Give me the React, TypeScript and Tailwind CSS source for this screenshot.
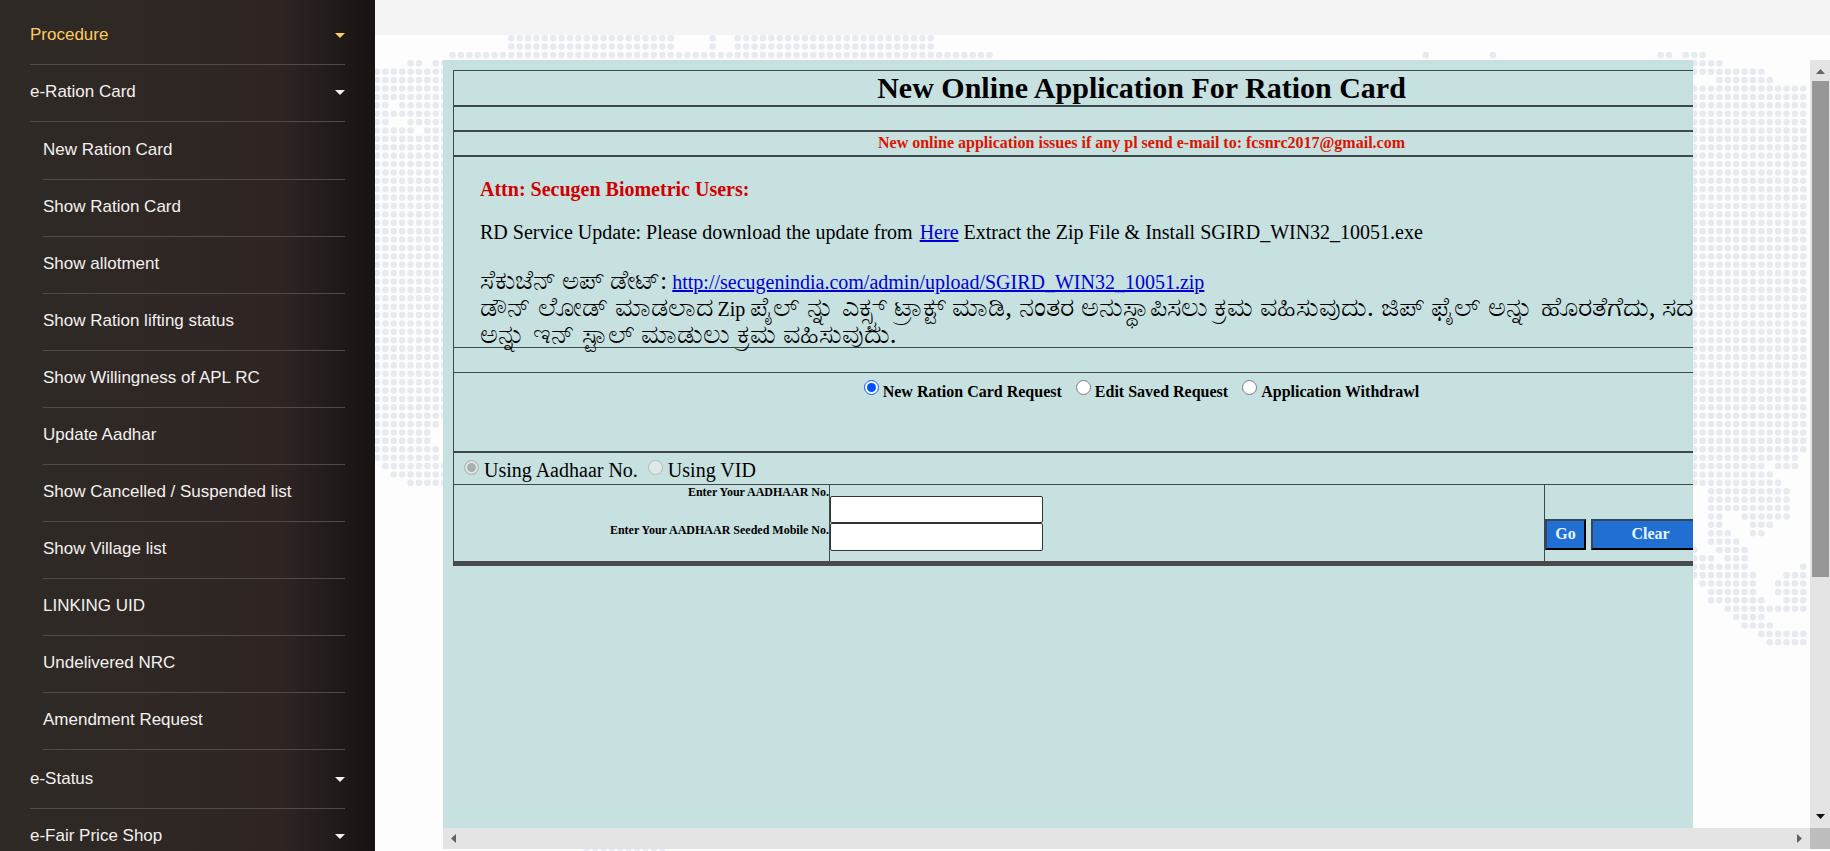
import { useState } from "react";

const cardLinks = [
  "New Ration Card",
  "Show Ration Card",
  "Show allotment",
  "Show Ration lifting status",
  "Show Willingness of APL RC",
  "Update Aadhar",
  "Show Cancelled / Suspended list",
  "Show Village list",
  "LINKING UID",
  "Undelivered NRC",
  "Amendment Request",
];

const requestTypes = ["New Ration Card Request", "Edit Saved Request", "Application Withdrawl"];

// World map dots: [first row, last row, first column, last column]
const dotRuns = [
  [0, 1, 15, 34], [0, 1, 39, 39], [0, 1, 42, 65],
  [2, 2, 8, 72], [2, 2, 124, 124], [2, 2, 132, 132], [2, 2, 152, 153], [2, 2, 155, 157],
  [3, 3, 3, 4], [3, 3, 6, 7], [4, 7, -1, 7], [8, 8, -1, 0], [8, 8, 2, 7], [9, 9, -1, 7],
  [10, 10, -1, 0], [10, 10, 3, 7], [11, 11, -1, 3], [11, 11, 5, 7], [12, 45, -1, 7],
  [46, 46, -1, 6], [47, 48, -1, 5], [49, 50, -1, 6], [51, 51, 0, 7], [52, 52, 1, 7], [53, 53, 3, 7],
  [3, 3, 156, 159], [4, 4, 156, 164], [5, 5, 159, 165], [6, 49, 156, 169],
  [50, 50, 156, 168], [51, 51, 156, 164], [51, 51, 166, 168], [52, 52, 156, 165], [53, 53, 156, 166],
  [54, 56, 158, 167], [57, 57, 158, 159], [57, 57, 162, 167], [58, 58, 158, 159], [58, 58, 163, 165],
  [59, 59, 158, 160], [59, 59, 163, 164], [60, 60, 158, 161], [61, 61, 156, 156], [61, 61, 159, 162],
  [62, 62, 156, 158], [62, 62, 160, 162], [63, 63, 156, 162], [63, 63, 169, 169],
  [64, 64, 156, 163], [64, 64, 167, 169], [65, 65, 157, 163], [65, 66, 166, 169], [66, 66, 158, 163],
  [67, 67, 158, 164], [67, 67, 167, 169], [68, 68, 160, 169], [69, 69, 161, 164], [70, 70, 162, 165],
  [71, 71, 164, 169], [72, 72, 165, 169], [97, 97, 24, 33],
];

const PITCH = 8.39;

const dotPath = dotRuns
  .map(([top, bottom, from, to]) => {
    let d = "";
    for (let row = top; row <= bottom; row++) {
      d += `M${10.4 + from * PITCH} ${38.2 + row * PITCH}h${(to - from) * PITCH + 0.1}`;
    }
    return d;
  })
  .join("");

function WorldMap() {
  return (
    <svg className="absolute inset-0 w-full h-full" aria-hidden="true">
      <path d={dotPath} fill="none" stroke="#e7eaf0" strokeWidth="6.6" strokeLinecap="round" strokeDasharray={`0 ${PITCH}`} />
    </svg>
  );
}

function MenuItem({ label, active }: { label: string; active?: boolean }) {
  return (
    <a
      href="#"
      className={`flex items-center justify-between pt-[15px] pb-[17px] border-b border-[#504a48] ${active ? "text-[#ffcb5c]" : "text-[#f3f1f0]"}`}
    >
      {label}
      <svg width="10" height="5" viewBox="0 0 10 5" fill="currentColor">
        <path d="M0 0h10L5 5z" />
      </svg>
    </a>
  );
}

function Sidebar() {
  return (
    <aside className="w-[375px] shrink-0 px-[30px] pt-2 bg-linear-to-r from-[#2f2a26] from-0% via-[#2e2523] via-75% to-[#171312] to-100% text-[17px] leading-6 overflow-hidden">
      <nav>
        <MenuItem label="Procedure" active />
        <MenuItem label="e-Ration Card" />
        <ul className="pl-[13px] pt-px pb-0.5">
          {cardLinks.map((label) => (
            <li key={label}>
              <a href="#" className="block pt-[15px] pb-[17px] border-b border-[#504a48] text-[#f3f1f0]">
                {label}
              </a>
            </li>
          ))}
        </ul>
        <MenuItem label="e-Status" />
        <MenuItem label="e-Fair Price Shop" />
      </nav>
    </aside>
  );
}

function Notice() {
  return (
    <div className="h-[191px] pl-[26px] pt-[18px] border-b border-[#3f484a] text-xl leading-7 whitespace-nowrap">
      <p className="font-bold text-[#d00000]">Attn: Secugen Biometric Users:</p>
      <p className="mt-[15px]">
        RD Service Update: Please download the update from{" "}
        <a href="#" className="ml-0.5 text-[#0000d4] underline">Here</a> Extract the Zip File &amp; Install SGIRD_WIN32_10051.exe
      </p>
      <div className="mt-[22px] leading-[27px]">
        <p className="h-[26px]">
          <span className="text-[26px] leading-none">ಸೆಕುಜೆನ್ ಅಪ್ ಡೇಟ್:</span>{" "}
          <a href="#" className="text-[#0000d4] underline">http://secugenindia.com/admin/upload/SGIRD_WIN32_10051.zip</a>
        </p>
        <p className="h-[27px]">
          <span className="text-[27px] leading-none">ಡೌನ್ ಲೋಡ್ ಮಾಡಲಾದ</span> Zip{" "}
          <span className="text-[27px] leading-none">
            ಪೈಲ್ ನ್ನು ಎಕ್ಸ್ಟ್ ಟ್ರಾಕ್ಟ್ ಮಾಡಿ, ನಂತರ ಅನುಸ್ಥಾಪಿಸಲು ಕ್ರಮ ವಹಿಸುವುದು. ಜಿಪ್ ಫೈಲ್ ಅನ್ನು ಹೊರತೆಗೆದು, ಸದರಿ
          </span>
        </p>
        <p className="h-[27px]">
          <span className="text-[27px] leading-none">ಅನ್ನು ಇನ್ ಸ್ಟಾಲ್ ಮಾಡುಲು ಕ್ರಮ ವಹಿಸುವುದು.</span>
        </p>
      </div>
    </div>
  );
}

const disabledRadio =
  "mt-[7px] w-[15px] h-[15px] appearance-none rounded-full border border-[#b2b9b9] bg-[#e0e9e9] checked:bg-[#a9aeae] checked:shadow-[inset_0_0_0_2px_#dfe7e7]";

function ApplicationForm() {
  const [requestType, setRequestType] = useState(requestTypes[0]);

  return (
    <form
      className="ml-2.5 mt-2.5 w-[1376px] border-t border-l border-[#3f484a] text-black"
      onSubmit={(e) => e.preventDefault()}
    >
      <h1 className="h-9 border-b-2 border-[#3f484a] text-center text-3xl leading-[34px] font-bold">
        New Online Application For Ration Card
      </h1>
      <div className="h-[25px] border-b-2 border-[#3f484a]" />
      <p className="h-[25px] border-b-2 border-[#3f484a] text-center text-base leading-[22px] font-bold text-[#d81600]">
        New online application issues if any pl send e-mail to: fcsnrc2017@gmail.com
      </p>
      <Notice />
      <div className="h-[25px] border-b border-[#3f484a]" />

      <div className="h-20 pt-[7px] border-b-2 border-[#3f484a] flex justify-center gap-3.5 text-base font-bold">
        {requestTypes.map((type) => (
          <label key={type} className="flex items-start gap-1">
            <input
              type="radio"
              name="request"
              className="w-[15px] h-[15px] accent-[#0050ff]"
              checked={requestType === type}
              onChange={() => setRequestType(type)}
            />
            <span className="leading-6">{type}</span>
          </label>
        ))}
      </div>

      <div className="h-8 pl-2.5 border-b border-[#3f484a] flex gap-2.5 text-xl leading-[34px]">
        <label className="flex gap-[5px]">
          <input type="radio" name="idType" className={disabledRadio} defaultChecked disabled />
          Using Aadhaar No.
        </label>
        <label className="flex gap-[5px]">
          <input type="radio" name="idType" className={disabledRadio} disabled />
          Using VID
        </label>
      </div>

      <div className="h-[81px] flex border-b-[5px] border-[#484b4a]">
        <div className="w-[376px] border-r border-[#3f484a] flex flex-col gap-5 text-right text-xs leading-[18px] font-bold">
          <label htmlFor="aadhaar" className="-mt-0.5">Enter Your AADHAAR No.</label>
          <label htmlFor="mobile">Enter Your AADHAAR Seeded Mobile No.</label>
        </div>
        <div className="w-[715px] pt-[11px] border-r border-[#3f484a] flex flex-col">
          <input id="aadhaar" type="text" className="w-[213px] h-[27px] px-1 bg-white border border-[#333] rounded-xs" />
          <input id="mobile" type="text" className="w-[213px] h-7 px-1 bg-white border border-[#333] rounded-xs" />
        </div>
        <div className="pt-[34px] flex items-start gap-[5px] text-base leading-6 font-bold text-[#e4f6ff]">
          <button className="w-[41px] h-[31px] pb-px flex items-center justify-center border-2 border-t-[#33475a] border-l-[#33475a] border-b-black border-r-black bg-[#216fd3]">
            Go
          </button>
          <button
            type="reset"
            className="w-[119px] h-[31px] pb-px flex items-center justify-center border-2 border-t-[#33475a] border-l-[#33475a] border-b-black border-r-black bg-[#216fd3]"
          >
            Clear
          </button>
        </div>
      </div>
    </form>
  );
}

export default function App() {
  return (
    <div className="flex h-screen overflow-hidden bg-[#fdfdfd] font-['Liberation_Sans',Arial,sans-serif]">
      <Sidebar />
      <main className="relative flex-1 min-w-0 flex flex-col">
        <WorldMap />
        <div className="relative h-[35px] shrink-0 bg-[#f4f4f4]" />

        {/* Framed page with its own scrollbars */}
        <div className="relative mt-[25px] ml-[68px] mb-0.5 flex-1 min-h-0 flex flex-col">
          <div className="flex-1 min-h-0 flex">
            <section className="flex-1 min-w-0 mr-[117px] overflow-hidden bg-[#c7e0e0] font-['Liberation_Serif','Times_New_Roman',serif]">
              <ApplicationForm />
            </section>
            <div className="w-5 shrink-0 flex flex-col items-center bg-[#e4e4e4]">
              <svg width="20" height="21" viewBox="0 0 20 21" fill="#636363">
                <path d="M6 14l4.5-5 4.5 5z" />
              </svg>
              <div className="w-[17px] h-[496px] bg-[#979797]" />
              <svg className="mt-auto" width="20" height="21" viewBox="0 0 20 21" fill="#111">
                <path d="M6 7h9l-4.500 5z" />
              </svg>
            </div>
          </div>
          <div className="h-[21px] shrink-0 flex justify-between bg-[#e4e4e4]">
            <svg width="20" height="21" viewBox="0 0 20 21" fill="#636363">
              <path d="M13 6v9L8 10.500z" />
            </svg>
            <div className="flex">
              <svg width="20" height="21" viewBox="0 0 20 21" fill="#636363">
                <path d="M7 6v9l5-4.500z" />
              </svg>
              <div className="w-5 bg-[#bdbdbd]" />
            </div>
          </div>
        </div>
      </main>
    </div>
  );
}
